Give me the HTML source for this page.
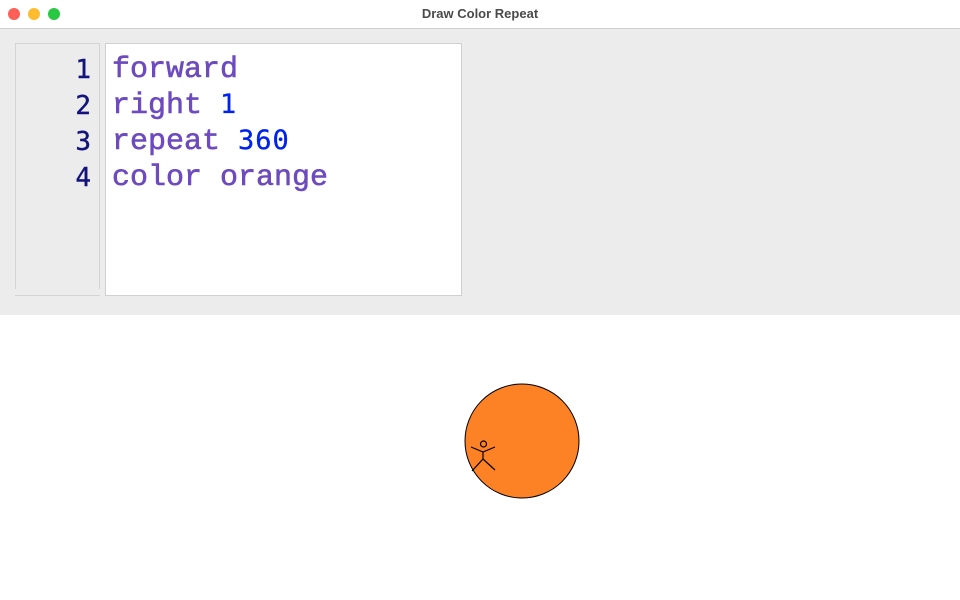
<!DOCTYPE html>
<html><head><style>
html,body{margin:0;padding:0;width:960px;height:600px;overflow:hidden;background:#fff;font-family:"Liberation Sans",sans-serif}
.title{position:absolute;left:0;top:0;width:960px;height:28px;background:#fff;border-bottom:1px solid #cfcfcf}
.title span{position:absolute;left:0;width:960px;top:6px;text-align:center;font-size:13px;font-weight:bold;color:#4a4a4a}
.dot{position:absolute;top:8px;width:12px;height:12px;border-radius:50%}
.top{position:absolute;left:0;top:29px;width:960px;height:286px;background:#ececec}
.gut{position:absolute;left:15px;top:43px;width:83px;height:245px;border-left:1px solid #d4d4d4;border-right:1px solid #d4d4d4;border-top:1px solid #d4d4d4}
.gl{position:absolute;left:15px;top:295px;width:85px;height:1px;background:#d4d4d4}
.ed{position:absolute;left:105px;top:43px;width:355px;height:251px;background:#fff;border:1px solid #d0d0d0}
.num{position:absolute;left:20px;width:71px;text-align:right;font-family:"DejaVu Sans Mono",monospace;font-size:26px;color:#13137e;line-height:36px;-webkit-text-stroke:0.4px #13137e}
.code{position:absolute;left:112px;font-family:"Liberation Mono",monospace;font-size:30px;color:#6d4bbf;white-space:pre;line-height:36px;-webkit-text-stroke:0.6px #6d4bbf}
.n{font-family:"DejaVu Sans Mono",monospace;font-size:27px;letter-spacing:1px;line-height:0;color:#0022ee;-webkit-text-stroke:0.3px #0022ee}
</style></head><body>
<div class="title"><div class="dot" style="left:8px;background:#fe5f57"></div><div class="dot" style="left:28px;background:#febc2e"></div><div class="dot" style="left:48px;background:#28c840"></div><span>Draw Color Repeat</span></div>
<div class="top"></div>
<div class="gut"></div><div class="gl"></div>
<div class="ed"></div>
<div class="num" style="top:52px">1</div>
<div class="num" style="top:88px">2</div>
<div class="num" style="top:124px">3</div>
<div class="num" style="top:160px">4</div>
<div class="code" style="top:52px">forward</div>
<div class="code" style="top:88px">right <span class="n">1</span></div>
<div class="code" style="top:124px">repeat <span class="n">360</span></div>
<div class="code" style="top:160px">color orange</div>
<svg style="position:absolute;left:0;top:0" width="960" height="600">
<circle cx="522" cy="441" r="57" fill="#fd8125" stroke="#000" stroke-width="1"/>
<g stroke="#000" stroke-width="1.2" fill="none">
<circle cx="483.5" cy="444" r="3"/>
<path d="M471 447L483 452L495 447M483 452V459M472 471L483 459L495 470"/>
</g>
</svg>
</body></html>
